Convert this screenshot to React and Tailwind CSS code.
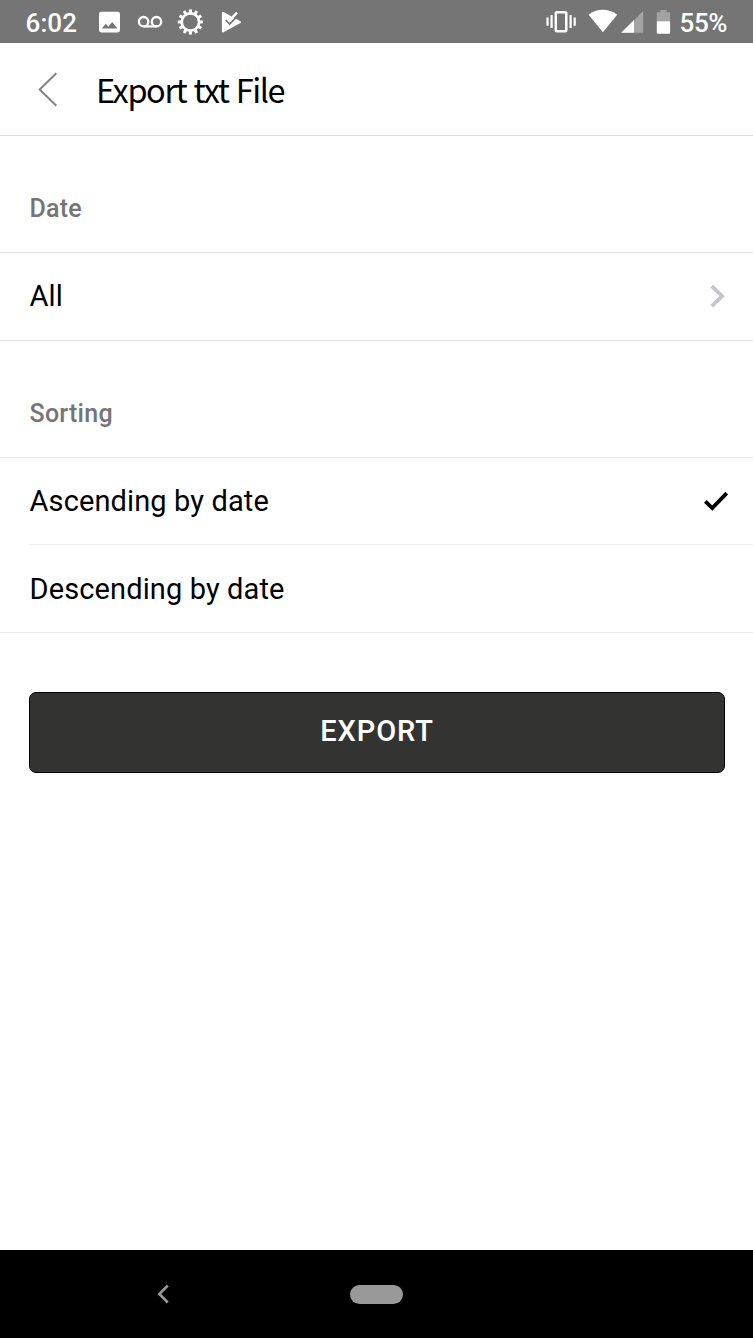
const TEETH = Array.from({ length: 12 }, (_, i) => i * 30);

function StatusBar() {
  return (
    <header className="flex h-[43px] shrink-0 items-start bg-[#757575] font-medium text-white">
      <span className="ml-[25.5px] mt-[6px] w-[72.5px] whitespace-nowrap text-[26px] leading-[34px] tracking-[0.1px]">6:02</span>
      <svg className="h-[43px] w-[24px]" viewBox="98 0 24 43" fill="none">
        <path fill="#fff" fillRule="evenodd" d="M101.3 11.8h16.4a2.3 2.3 0 0 1 2.3 2.3v16a2.3 2.3 0 0 1-2.3 2.3h-16.4a2.3 2.3 0 0 1-2.3-2.3v-16a2.3 2.3 0 0 1 2.3-2.3ZM101.8 28.5h15.6l-5.2-6.4-3.9 4.6-2.5-2.9Z" />
      </svg>
      <svg className="ml-[14px] h-[43px] w-[28px]" viewBox="136 0 28 43" fill="none" stroke="#fff" strokeWidth="2.3">
        <circle cx="143.6" cy="21.7" r="4.7" />
        <circle cx="156.5" cy="21.7" r="4.7" />
        <path d="M143.6 26.4h12.9" />
      </svg>
      <svg className="ml-[12px] h-[43px] w-[30px]" viewBox="176 0 30 43" fill="none" stroke="#fff">
        <circle cx="190.4" cy="22" r="8.7" strokeWidth="2.7" />
        {TEETH.map((a) => (
          <path key={a} d="M190.4 13.2v-3.8" strokeWidth="3" transform={`rotate(${a} 190.4 22)`} />
        ))}
      </svg>
      <svg className="ml-[14px] h-[43px] w-[24px]" viewBox="220 0 24 43" fill="none">
        <path fill="#fff" d="M221.9 13.2c0-1.2.8-1.6 1.7-1.1l16.8 9.1c.9.5.9 1.4 0 1.9l-16.8 9.1c-.9.5-1.7.1-1.7-1Z" />
        <path fill="#757575" d="M230.8 16 235.5 11.5l4 3.5-2.8 4.2Z" />
        <path stroke="#757575" strokeWidth="1.7" d="m225.7 20 4 4.1 8.8-9.2" />
        <path stroke="#fff" strokeWidth="2.5" d="m229.3 20.6 7.7-8" />
      </svg>
      <svg className="ml-[300px] h-[43px] w-[34px]" viewBox="544 0 34 43" fill="none" stroke="#fff">
        <rect x="555.8" y="12.3" width="10.5" height="18.9" rx="1" strokeWidth="2.5" />
        <path d="M547.5 17.5v8.2M551.6 15v13M570.6 15v13M574.7 17.5v8.2" strokeWidth="2.2" />
      </svg>
      <svg className="ml-[9px] h-[43px] w-[57px]" viewBox="587 0 57 43">
        <path fill="#fff" d="M588.6 14.7C596.5 8.2 609 8.2 617.2 14.7L602.9 32.3Z" />
        <path fill="#a3a3a3" d="M643.2 11v21.7h-22Z" />
        <path fill="#fff" d="M634 20.1v12.6h-12.8Z" />
      </svg>
      <svg className="ml-[10px] h-[43px] w-[18px]" viewBox="654 0 18 43">
        <path fill="#a3a3a3" d="M660.3 10h6.2v2.3h2.6a1 1 0 0 1 1 1v8h-13.3v-8a1 1 0 0 1 1-1h2.5Z" />
        <path fill="#fff" d="M656.8 21.3h13.3v11.4a1 1 0 0 1-1 1h-11.3a1 1 0 0 1-1-1Z" />
      </svg>
      <span className="ml-[7.5px] mt-[6px] whitespace-nowrap text-[26px] leading-[34px] tracking-[-0.4px]">55%</span>
    </header>
  );
}

function SectionTitle({ children }) {
  return (
    <h2 className="flex h-[117px] shrink-0 items-center border-b-[1.5px] border-[#e6e6e6] pl-[29.5px] pt-[29px] text-[25px] font-medium leading-none tracking-[0.25px] text-[#757575]">
      {children}
    </h2>
  );
}

export default function App() {
  return (
    <div className="flex h-[1338px] w-[753px] flex-col overflow-hidden bg-white font-['Roboto',sans-serif] text-black">
      <StatusBar />
      <div className="flex h-[93px] shrink-0 items-center border-b-[1.5px] border-[#dcdcdc]">
        <svg className="ml-[36px] mt-px h-[40px] w-[24px]" viewBox="36 70 24 40" fill="none" stroke="#828282" strokeWidth="2">
          <path d="M56.3 73.3 39.7 89.5 56.3 105.7" />
        </svg>
        <h1 className="ml-[36px] whitespace-nowrap font-['Noto_Sans_CJK_KR',sans-serif] text-[32.5px] font-normal leading-[48px] tracking-[-1.42px] [word-spacing:1.3px]">Export txt File</h1>
      </div>

      <SectionTitle>Date</SectionTitle>
      <button className="flex h-[88px] shrink-0 items-center justify-between border-b-[1.5px] border-[#e6e6e6] pl-[29.5px] pr-[26px] text-[29px] tracking-[0.1px]">
        <span>All</span>
        <svg className="h-[30px] w-[18px]" viewBox="709 282 18 30" fill="none" stroke="#c5c5ca" strokeWidth="3.8">
          <path d="m711.7 286.2 10.5 10-10.5 10" />
        </svg>
      </button>

      <SectionTitle>Sorting</SectionTitle>
      <button className="flex h-[86px] shrink-0 items-center justify-between pl-[29.5px] pr-[23px] text-[29px] tracking-[0.12px]">
        <span className="pt-[2px]">Ascending by date</span>
        <svg className="h-[30px] w-[28px]" viewBox="702 486 28 30" fill="none" stroke="#000" strokeWidth="3.8">
          <path d="m705.3 501.3 7 6.8 14.4-15" />
        </svg>
      </button>
      <div className="ml-[29px] h-px shrink-0 bg-[#efefef]" />
      <button className="flex h-[88px] shrink-0 items-center border-b-[1.5px] border-[#e6e6e6] pl-[29.5px] pt-[2px] text-[29px] tracking-[0.12px]">
        Descending by date
      </button>

      <button className="mx-auto mt-[58.5px] flex h-[81.5px] w-[696px] shrink-0 items-center justify-center rounded-[7px] border border-black bg-[#333331] pb-px pl-px text-[29px] font-medium tracking-[0.9px] text-white">
        EXPORT
      </button>

      <nav className="mt-auto flex h-[88px] shrink-0 items-center bg-black">
        <svg className="ml-[154px] h-[24px] w-[18px]" viewBox="154 1282 18 24" fill="none" stroke="#999" strokeWidth="2.5">
          <path d="m167.8 1285.5-8.5 8.5 8.5 8.5" />
        </svg>
        <div className="ml-[178px] h-[19px] w-[53px] rounded-full bg-[#999]" />
      </nav>
    </div>
  );
}
